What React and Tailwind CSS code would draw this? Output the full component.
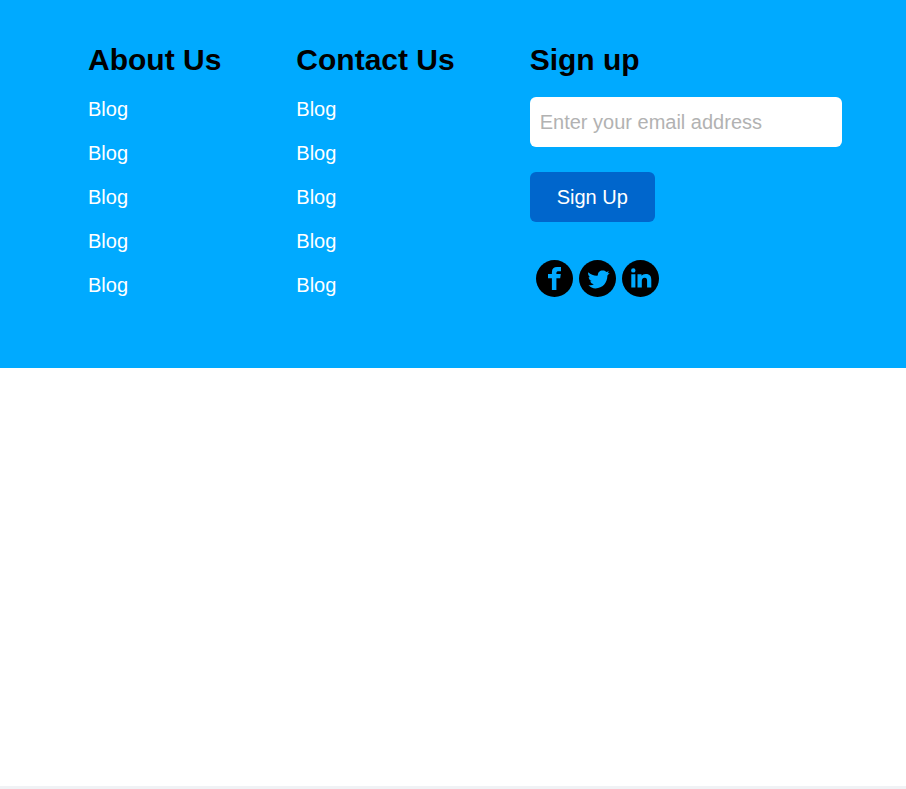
const columns = [
  { title: 'About Us', links: ['Blog', 'Blog', 'Blog', 'Blog', 'Blog'] },
  { title: 'Contact Us', links: ['Blog', 'Blog', 'Blog', 'Blog', 'Blog'] },
];

const socials = [
  {
    name: 'Facebook',
    path: 'M15.900 30V18.300H12V14h3.900v-1.800c0-3.400 2-5.100 5.200-5.100H25v4.100h-2.400c-1.600 0-2.200.6-2.200 1.700V14h4.400l-.6 4.300h-3.800V30z',
  },
  {
    name: 'Twitter',
    path: 'M9.200 12.300C12 14.800 15.500 16 18.900 15.600C18.600 12.600 20.800 10.600 23.600 10.600C25.200 10.600 26.300 11.100 27.200 12L30 11.300L28.600 13.300L30.700 13L28.400 15.600C28.400 23 23.500 28.400 16.500 28.400C13.800 28.400 11.300 27.300 9.500 25C11.800 25.600 13.400 25.200 14.800 24.200C12.900 23.800 11.600 22.800 11.300 21.200L12.800 21.100C10.800 20.200 9.700 18.700 9.700 16.900L11.200 17.300C9.500 15.900 8.800 14.200 9.200 12.300z',
  },
  {
    name: 'LinkedIn',
    path: 'M9.300 14.300h4.100v13.200H9.300zM11.300 8.200a2.200 2.200 0 1 1 0 4.400 2.200 2.200 0 0 1 0-4.400zM15.500 14.300h4v1.500c.7-1.100 2.100-1.900 4.200-1.900 4.500 0 5.600 2.500 5.600 6.200v7.400h-4.200v-6.600c0-1.700-.3-3.100-2.400-3.100s-2.900 1.400-2.900 3.100v6.600h-4.300z',
  },
];

export default function App() {
  return (
    <div className="flex min-h-screen flex-col bg-white font-['Liberation_Sans',Arial,sans-serif] text-xl">
      <footer className="flex gap-[75px] bg-[#00aaff] pt-10 pr-16 pb-[61px] pl-22">
        {columns.map((column) => (
          <nav key={column.title} aria-label={column.title}>
            <h2 className="text-3xl leading-10 font-bold text-black">{column.title}</h2>
            <ul className="mt-[7px]">
              {column.links.map((link, index) => (
                <li key={index} className="leading-11 text-white">
                  <a href="#">{link}</a>
                </li>
              ))}
            </ul>
          </nav>
        ))}
        <section className="flex-1">
          <h2 className="text-3xl leading-10 font-bold text-black">Sign up</h2>
          <form className="mt-[17px] flex flex-col items-start gap-[25px]">
            <input
              type="email"
              aria-label="Email address"
              placeholder="Enter your email address"
              className="h-[50px] w-full rounded-md bg-white px-2.5 placeholder:text-[#b2b2b2]"
            />
            <button type="button" className="h-[50px] rounded-md bg-[#0066cc] px-[27px] text-white">
              Sign Up
            </button>
          </form>
          <div className="mt-[38px] flex gap-1.5 pl-1.5">
            {socials.map((social) => (
              <a key={social.name} href="#" aria-label={social.name}>
                <svg viewBox="0 0 37 37" className="size-[37px]">
                  <circle cx="18.500" cy="18.500" r="18.500" fill="#000" />
                  <path d={social.path} fill="#00aaff" />
                </svg>
              </a>
            ))}
          </div>
        </section>
      </footer>
      <div className="mt-auto h-[3px] bg-[#f0f2f5]" />
    </div>
  );
}
